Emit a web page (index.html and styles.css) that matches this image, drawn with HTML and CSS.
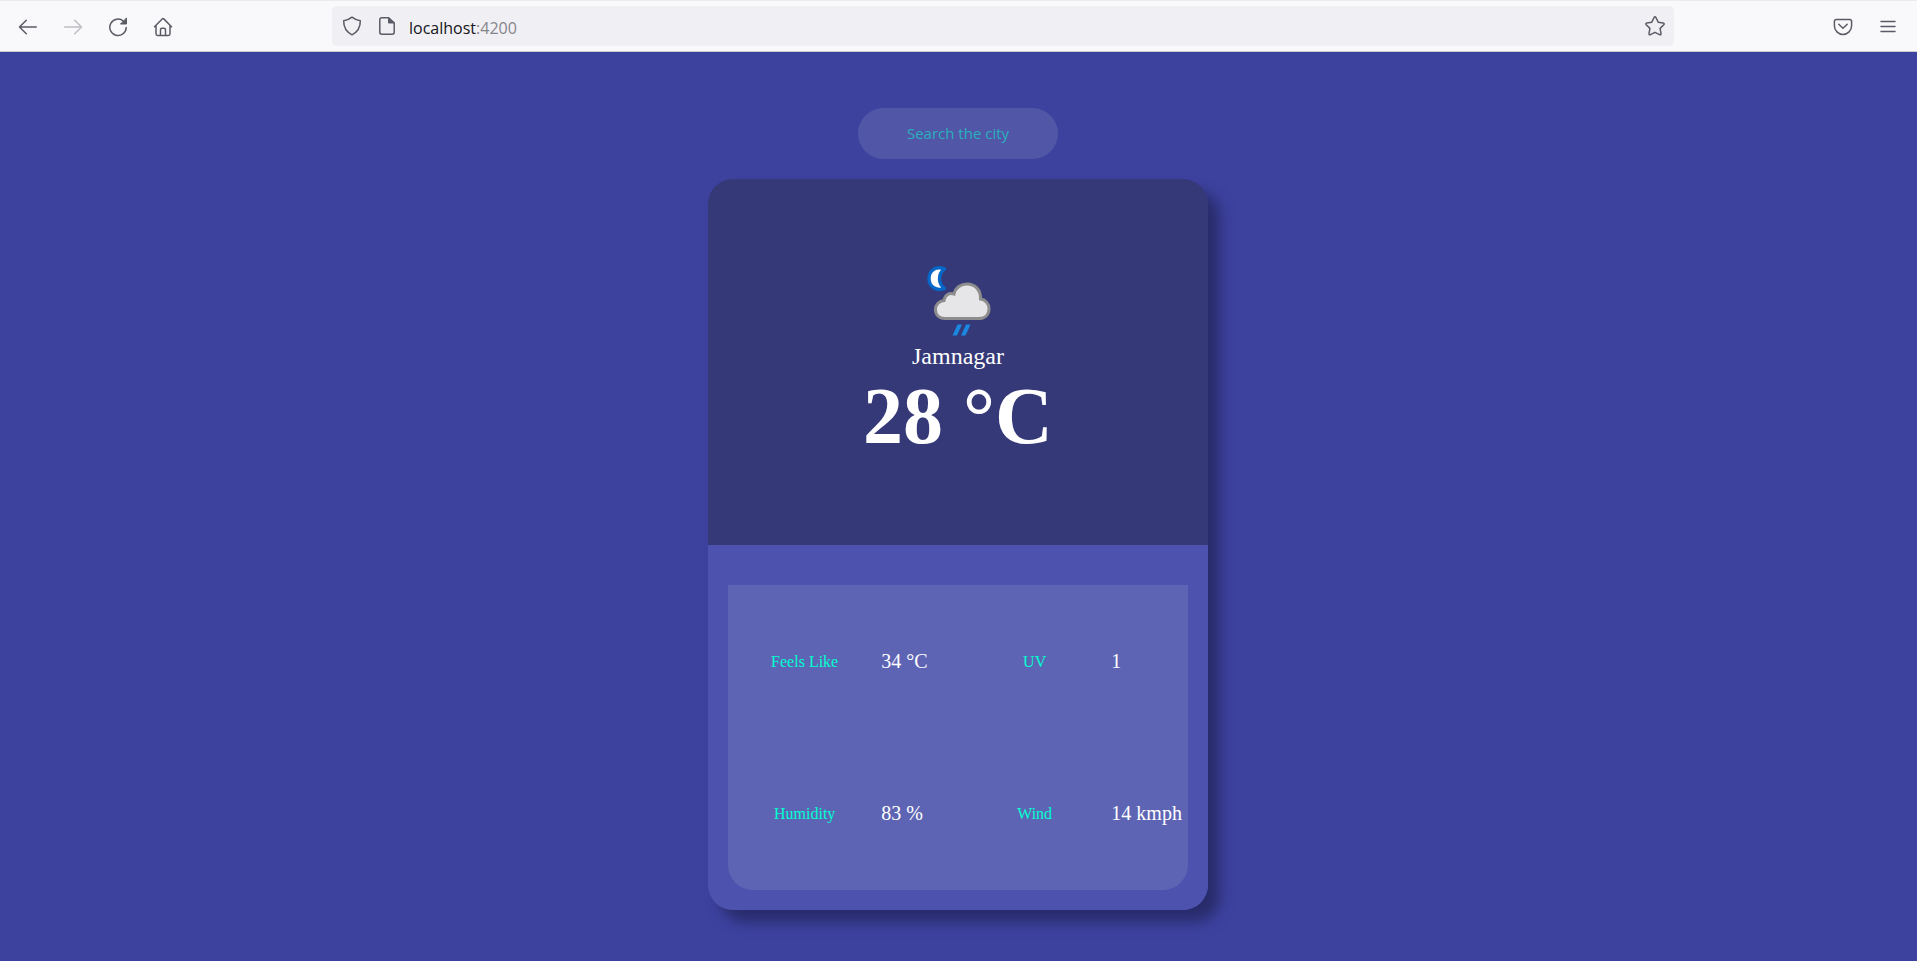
FILE: index.html
```html
<!DOCTYPE html>
<html lang="en">
<head>
<meta charset="utf-8">
<title>Weather</title>
<link rel="stylesheet" href="styles.css">
</head>
<body>
<header class="toolbar">
  <nav class="tools" aria-label="Navigation">
    <button class="tool" type="button" aria-label="Back"><svg class="icon" viewBox="0 0 20 20"><path d="M18.300 10H1.800M8.300 3.200L1.500 10l6.800 6.800"/></svg></button>
    <button class="tool" type="button" aria-label="Forward" disabled><svg class="icon" viewBox="0 0 20 20"><path d="M1.700 10h16.500M11.700 3.200l6.800 6.800-6.800 6.800"/></svg></button>
    <button class="tool" type="button" aria-label="Reload"><svg class="icon" viewBox="0 0 20 20"><path d="M18.200 10.500a8.200 8.200 0 1 1-2.700-6.300l1.300 1.300"/><path class="solid" d="M18.500 1.300v5.700h-5.700z"/></svg></button>
    <button class="tool" type="button" aria-label="Home"><svg class="icon" viewBox="0 0 20 20"><path d="M1.500 9.800L9.200 1.900q.8-.8 1.600 0l7.700 7.900M3 8.700v8.100q0 1.700 1.700 1.700h10.600q1.700 0 1.700-1.700V8.700M7.500 18.300v-5.500q0-1.500 1.500-1.500h2q1.500 0 1.500 1.500v5.500"/></svg></button>
  </nav>
  <div class="spring"></div>
  <div class="urlbar">
    <svg class="icon" viewBox="0 0 20 20"><path d="M10 1.200c2.400 2 5 3 8.300 3.600q.3 9.700-8.300 14Q1.400 14.500 1.700 4.800C5 4.200 7.600 3.200 10 1.200z"/></svg>
    <svg class="icon" viewBox="0 0 20 20"><path d="M11.500 1.800H4.700Q2.800 1.800 2.800 3.700v12.600q0 1.900 1.900 1.900h10.600q1.900 0 1.900-1.900V7z"/><path class="solid" d="M11.500 1.800V7h5.700z"/></svg>
    <div class="url" role="textbox" aria-label="Address" contenteditable="true" spellcheck="false">localhost<span class="port">:4200</span></div>
    <button class="star" type="button" aria-label="Bookmark this page"><svg class="icon" viewBox="0 0 20 20"><path d="M9.100 1.500q.9-1.400 1.800 0l2.300 4.700 5 .8q1.600.4.600 1.700l-3.700 3.700.9 5.200q.1 1.600-1.400 1.100L10 16.300l-4.600 2.400q-1.500.5-1.400-1.100l.9-5.200-3.700-3.700Q.2 7.400 1.800 7l5-.8z"/></svg></button>
  </div>
  <div class="spring"></div>
  <div class="tools">
    <button class="tool" type="button" aria-label="Pocket"><svg class="icon" viewBox="0 0 20 20"><path d="M3.400 2.500h13.200q2 0 2 2v4.300a8.600 8.600 0 0 1-17.200 0V4.500q0-2 2-2zM5.800 7.300L10 11.300l4.200-4"/></svg></button>
    <button class="tool" type="button" aria-label="Menu"><svg class="icon" viewBox="0 0 20 20"><path d="M3 4.500h14M3 9.500h14M3 14.500h14"/></svg></button>
  </div>
</header>
<main class="page">
  <input class="search" type="text" placeholder="Search the city" aria-label="Search the city">
  <article class="card">
    <section class="summary">
      <svg class="weather" viewBox="0 1 66 82" role="img" aria-label="Light rain at night">
        <path d="M19.500 9.800C11 6.500 4 11.500 4 19.500c0 8.500 7.500 13 15.500 10-6.500-5-6.800-14.500 0-19.700z" fill="#fff" stroke="#0767c6" stroke-width="3.400" stroke-linejoin="round"/>
        <path d="M20 59.500c-6 0-9.500-3.800-9.500-9 0-5 3.700-8.700 8.500-9 .5-5 5-8.200 10-6.500C30.500 28.500 36 25 42 25c8 0 14 6 13.500 15 4.500.5 8.500 4.500 8.500 9.700 0 6-4 9.800-10 9.800z" fill="#e6e6e8" stroke="#8d8d8d" stroke-width="3"/>
        <path d="M32.500 65.500h4.500L32 76.500h-4.500zM41 65.500h4.500l-5 11H36z" fill="#1b87e0"/>
      </svg>
      <div class="city">Jamnagar</div>
      <h1 class="temp">28 °C</h1>
    </section>
    <section class="details">
      <dl class="metrics">
        <dt class="label">Feels Like</dt><dd class="value">34 °C</dd>
        <dt class="label">UV</dt><dd class="value">1</dd>
        <dt class="label">Humidity</dt><dd class="value">83 %</dd>
        <dt class="label">Wind</dt><dd class="value">14 kmph</dd>
      </dl>
    </section>
  </article>
</main>
</body>
</html>
```
FILE: styles.css
```css
* {
  box-sizing: border-box;
}

body {
  margin: 0;
  min-height: 100vh;
  display: flex;
  flex-direction: column;
  background: #3e429f;
  font-family: "Liberation Serif", "Times New Roman", serif;
}

button {
  padding: 0;
  border: 0;
  background: none;
  color: inherit;
}

/* Browser bar */
.toolbar {
  display: flex;
  align-items: center;
  height: 52px;
  padding: 0 9px 0 8px;
  background: #f9f9fb;
  border-top: 1px solid #ececee;
  border-bottom: 1px solid #ccccce;
  color: #5b5b66;
}

.tools {
  display: flex;
  gap: 5px;
}

.tool {
  display: grid;
  place-items: center;
  width: 40px;
  height: 40px;
  padding-top: 1px;
}

.tool:disabled {
  color: #bfbfc4;
}

.icon {
  width: 20px;
  height: 20px;
  flex: none;
  display: block;
  fill: none;
  stroke: currentColor;
  stroke-width: 1.5;
  stroke-linecap: round;
  stroke-linejoin: round;
}

.solid {
  fill: currentColor;
  stroke-width: 1;
}

.spring {
  flex: 1 1 0;
}

.urlbar {
  flex: 9 1 0;
  display: flex;
  align-items: center;
  gap: 15px;
  height: 40px;
  margin: 0 2px;
  padding: 0 9px 0 10px;
  background: #f0f0f4;
  border-radius: 5px;
}

.url {
  flex: 1;
  margin-left: -3px;
  padding-top: 3px;
  font: 16px/24px "Open Sans", "Noto Sans", sans-serif;
  color: #15141a;
  outline: none;
}

.port {
  color: #85858c;
}

/* Weather page */
.page {
  flex: 1;
  display: flex;
  flex-direction: column;
  align-items: center;
  gap: 20px;
  padding: 56px 17px 51px 16px;
}

.search {
  width: 200px;
  height: 51px;
  padding: 0 16px 2px;
  border: 0;
  border-radius: 26px;
  background: #5256a7;
  color: #fff;
  font: 15px "Open Sans", "Noto Sans", sans-serif;
  text-align: center;
  outline: none;
}

.search::placeholder {
  color: #29b0bc;
  opacity: 1;
}

.card {
  flex: 1;
  display: grid;
  grid-template-rows: 1fr 1fr;
  width: 100%;
  max-width: 500px;
  border-radius: 25px;
  overflow: hidden;
  box-shadow: 12px 12px 14px #292c6b;
}

.summary {
  display: flex;
  flex-direction: column;
  align-items: center;
  justify-content: center;
  padding-bottom: 2px;
  background: #353978;
  color: #fff;
}

.weather {
  width: 66px;
  height: 82px;
}

.city {
  font-size: 24px;
  line-height: 28px;
}

.temp {
  margin: 0;
  font-size: 80px;
  line-height: 92px;
}

.details {
  display: flex;
  padding: 40px 20px 20px;
  background: #4d52ae;
}

.metrics {
  flex: 1;
  display: grid;
  grid-template-columns: 2fr 1fr 2fr 1fr;
  grid-template-rows: 1fr 1fr;
  align-items: center;
  margin: 0;
  padding-top: 1px;
  background: #5e64b4;
  border-radius: 0 0 25px 25px;
}

.label {
  color: #00ffd0;
  font-size: 16px;
  text-align: center;
}

.value {
  min-width: 0;
  margin: 0;
  color: #fff;
  font-size: 20px;
  white-space: nowrap;
}
```
